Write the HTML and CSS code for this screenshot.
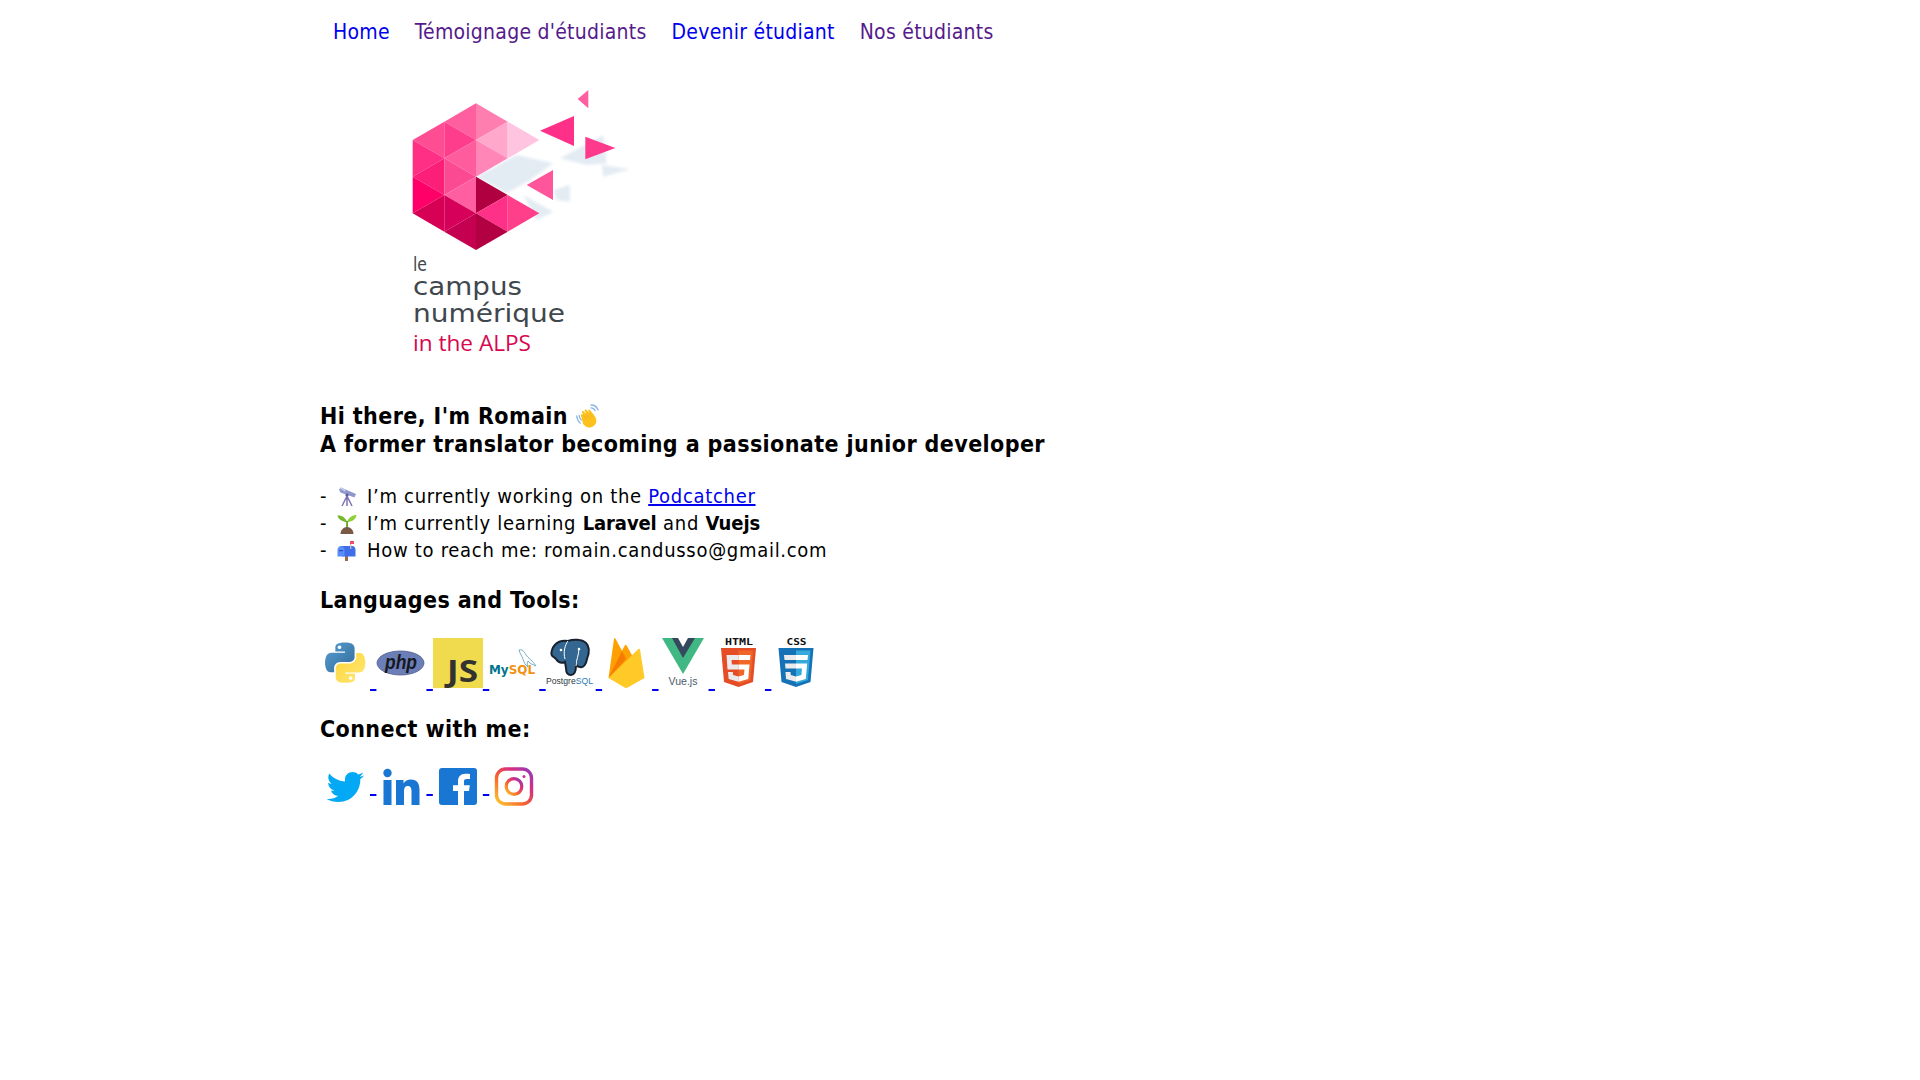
FILE: index.html
```html
<!DOCTYPE html>
<html lang="en">
<head>
    <meta charset="UTF-8">
    <title>Romain Candusso</title>
    <link rel="stylesheet" href="styles.css">
</head>
<body>
    <div class="page">
        <nav class="topnav">
            <a href="#home">Home</a>
            <a class="seen" href="#temoignage">Témoignage d'étudiants</a>
            <a href="#devenir">Devenir étudiant</a>
            <a class="seen" href="#etudiants">Nos étudiants</a>
        </nav>

        <svg class="logo" viewBox="0 0 240 285" width="240" height="285">
            <defs>
                <filter id="soft" x="-30%" y="-30%" width="160%" height="160%"><feGaussianBlur stdDeviation="4.500"></feGaussianBlur></filter>
            </defs>
            <g transform="translate(-10 0) scale(.33333)">
                <g fill="#e3ebf3" filter="url(#soft)">
                    <polygon points="260,290 380,225 490,250 420,300 350,340"></polygon>
                    <polygon points="510,235 640,165 650,250 590,255"></polygon>
                    <polygon points="635,255 720,268 640,290"></polygon>
                    <polygon points="490,330 540,315 540,365 500,360"></polygon>
                    <polygon points="400,345 470,385 490,395 440,420"></polygon>
                </g>
                <polygon fill="#ff4d94" points="68,180 163,125 163,235"></polygon>
                <polygon fill="#ff2f85" points="68,180 163,235 68,290"></polygon>
                <polygon fill="#fb1f78" points="68,290 163,235 163,345"></polygon>
                <polygon fill="#ff0068" points="68,290 163,345 68,400"></polygon>
                <polygon fill="#d60055" points="68,400 163,345 163,455"></polygon>
                <polygon fill="#ff5f9f" points="163,125 258,70 258,180"></polygon>
                <polygon fill="#ff3d8d" points="163,125 258,180 163,235"></polygon>
                <polygon fill="#ff5c9e" points="163,235 258,180 258,290"></polygon>
                <polygon fill="#fb4a92" points="163,235 258,290 163,345"></polygon>
                <polygon fill="#ff5fa0" points="163,345 258,290 258,400"></polygon>
                <polygon fill="#d6005a" points="163,345 258,400 163,455"></polygon>
                <polygon fill="#c60050" points="163,455 258,400 258,510"></polygon>
                <polygon fill="#ff7eb0" points="258,70 353,125 258,180"></polygon>
                <polygon fill="#ffa8cc" points="258,180 353,125 353,235"></polygon>
                <polygon fill="#ff86b7" points="258,180 353,235 258,290"></polygon>
                <polygon fill="#b00040" points="258,290 353,345 258,400"></polygon>
                <polygon fill="#ff3088" points="258,400 353,345 353,455"></polygon>
                <polygon fill="#b30042" points="258,400 353,455 258,510"></polygon>
                <polygon fill="#ffc4e0" points="353,125 448,180 353,235"></polygon>
                <polygon fill="#ff3f8a" points="353,345 448,400 353,455"></polygon>
                <polygon fill="#ff3088" points="450,152 552,108 552,198"></polygon>
                <polygon fill="#ff5fa0" points="595,30 595,85 563,57"></polygon>
                <polygon fill="#ff3a8c" points="586,170 676,204 586,238"></polygon>
                <polygon fill="#ff559a" points="410,315 489,270 489,360"></polygon>
            </g>
            <text class="logo-grey logo-le" x="13" y="191" textLength="14" lengthAdjust="spacingAndGlyphs">le</text>
            <text class="logo-grey" x="13" y="215" textLength="109" lengthAdjust="spacingAndGlyphs">campus</text>
            <text class="logo-grey" x="13" y="242" textLength="152" lengthAdjust="spacingAndGlyphs">numérique</text>
            <text class="logo-pink" x="13" y="271" textLength="118" lengthAdjust="spacingAndGlyphs">in the ALPS</text>
        </svg>

        <h3 class="intro">Hi there, I'm Romain
            <svg class="wave" viewBox="0 0 24 24" width="24" height="24">
                <g fill="none" stroke="#8ab4e8" stroke-width="1.3" stroke-linecap="round">
                    <path d="M.8 12c.2 3 1.500 5.500 3.400 7"></path>
                    <path d="M3.200 11.500c.2 1.800.9 3.300 2 4.500"></path>
                    <path d="M15 1c3 0 6 2.200 7 5"></path>
                    <path d="M15 3.800c1.700.1 3.300 1.200 4 2.800"></path>
                </g>
                <path fill="#fcc21b" d="M5 11.500c-.6-1 .7-2 1.500-1.300l1 1L6 8.500c-.6-1 .8-2 1.600-1.200l3 3.200L8.700 7c-.6-1.100.9-2 1.700-1.200l3.300 3.800-1.400-2.700c-.5-1 1-1.900 1.700-1l4 5.200c2.300 3 2.800 5.700 2 8-1.200 3-4.500 4.900-7.500 4.400-2.700-.4-4.200-2-5.500-3.700z"></path>
                <path fill="none" stroke="#e8a01e" stroke-width=".6" d="M7.500 11.200l3.500 4M10.600 10.500l3.400 4M13.700 9.600l2.600 3.400"></path>
            </svg>
            <br>A former translator becoming a passionate junior developer</h3>

        <p class="about">
            - <svg class="emoji" viewBox="0 0 20 20" width="20" height="20">
                <g fill="none" stroke="#7c74b4" stroke-width="1.5">
                    <path d="M10 9l-5 10M10 9v10M10 9l5 10"></path>
                </g>
                <path fill="#8f97cc" d="M2 2.500l2-2 15 6.500-1.500 3.500-14-5z"></path>
                <path fill="#c5cbe8" d="M3 1.500l1-1 5 2.200-1 2z"></path>
                <circle cx="10" cy="8" r="1.600" fill="#5e5a94"></circle>
            </svg> I’m currently working on the <a href="#podcatcher">Podcatcher</a><br>
            - <svg class="emoji" viewBox="0 0 20 20" width="20" height="20">
                <path fill="#76b82a" d="M10 8C8.500 3.500 4.500 1 .5 1.500 1 5.500 6 8 10 8z"></path>
                <path fill="#8fcf3a" d="M10 8c1.500-4.500 5.500-7 9.500-7-.5 4.500-5 7-9.500 7z"></path>
                <rect x="9.200" y="7" width="1.700" height="7" fill="#5c9a1e"></rect>
                <path fill="#7a5a44" d="M3.500 20c0-4 3-7 6.500-7s6.500 3 6.500 7z"></path>
            </svg> I’m currently learning <b>Laravel</b> and <b>Vuejs</b><br>
            - <svg class="emoji" viewBox="0 0 20 20" width="20" height="20">
                <rect x="8" y="15" width="3" height="5" fill="#9b6a4c"></rect>
                <path fill="#3f6fe8" d="M4 5h11c2.500 0 3.500 2 3.500 4v6.500H5z"></path>
                <path fill="#5b8dfa" d="M4 5c2 0 3.500 1.800 3.500 4v6.500H.5V9C.5 6.800 2 5 4 5z"></path>
                <rect x="13" y="0" width="1.300" height="8" fill="#c9b9c2"></rect>
                <rect x="13" y="0" width="4" height="3" fill="#ee4d63"></rect>
                <rect x="2" y="9" width="4" height="1.200" fill="#2a4fb5"></rect>
            </svg> How to reach me: romain.candusso@gmail.com
        </p>

        <h3 class="section-title">Languages and Tools:</h3>
        <p class="tools">
            <a href="#python"><svg class="tool" viewBox="0 0 50 50" width="50" height="50">
                <defs>
                    <linearGradient id="pyblue" x1="0" y1="0" x2="1" y2="1"><stop offset="0" stop-color="#5a9fd4"></stop><stop offset="1" stop-color="#306998"></stop></linearGradient>
                    <linearGradient id="pyyellow" x1="0" y1="0" x2="1" y2="1"><stop offset="0" stop-color="#ffe873"></stop><stop offset="1" stop-color="#ffd43b"></stop></linearGradient>
                </defs>
                <g transform="translate(5 4.500) scale(.36)">
                    <path fill="url(#pyblue)" d="M54.900 0C50.300 0 46 .4 42.100 1.100 30.800 3.100 28.700 7.300 28.700 15.100V25.200H55.500V28.600H18.600C10.800 28.600 4 33.300 1.900 42.200-.6 52.400-.7 58.800 1.900 69.400 3.800 77.300 8.300 82.900 16.100 82.900H25.300V70.700C25.300 61.900 33 54 42.100 54H68.900C76.300 54 82.200 47.900 82.200 40.400V15.100C82.200 7.800 76.100 2.400 68.900 1.100 64.300.3 59.500 0 54.900 0ZM40.400 8.200C43.200 8.200 45.400 10.500 45.400 13.300 45.400 16.100 43.200 18.400 40.400 18.400 37.600 18.400 35.400 16.100 35.400 13.300 35.400 10.500 37.600 8.200 40.400 8.200Z"></path>
                    <path fill="url(#pyyellow)" transform="rotate(180 56 56)" d="M54.900 0C50.300 0 46 .4 42.100 1.100 30.800 3.100 28.700 7.300 28.700 15.100V25.200H55.500V28.600H18.600C10.800 28.600 4 33.300 1.900 42.200-.6 52.400-.7 58.800 1.900 69.400 3.800 77.300 8.300 82.900 16.100 82.900H25.300V70.700C25.300 61.900 33 54 42.100 54H68.900C76.300 54 82.200 47.900 82.200 40.400V15.100C82.200 7.800 76.100 2.400 68.900 1.100 64.300.3 59.500 0 54.900 0ZM40.400 8.200C43.200 8.200 45.400 10.500 45.400 13.300 45.400 16.100 43.200 18.400 40.400 18.400 37.600 18.400 35.400 16.100 35.400 13.300 35.400 10.500 37.600 8.200 40.400 8.200Z"></path>
                </g>
            </svg> </a>
            <a href="#php"><svg class="tool" viewBox="0 0 50 50" width="50" height="50">
                <ellipse cx="24.500" cy="25" rx="23.500" ry="12" fill="#6c7eb7" stroke="#4c5a8c" stroke-width=".8"></ellipse>
                <text class="php-text" x="25" y="30.500" text-anchor="middle" textLength="32" lengthAdjust="spacingAndGlyphs">php</text>
            </svg> </a>
            <a href="#js"><svg class="tool" viewBox="0 0 50 50" width="50" height="50">
                <rect width="50" height="50" fill="#f0db4f"></rect>
                <text class="js-text" x="14" y="44" textLength="31" lengthAdjust="spacingAndGlyphs">JS</text>
            </svg> </a>
            <a href="#mysql"><svg class="tool" viewBox="0 0 50 50" width="50" height="50">
                <text class="mysql-text" x="0" y="36" textLength="46" lengthAdjust="spacingAndGlyphs"><tspan fill="#00758f">My</tspan><tspan fill="#f29111">SQL</tspan></text>
                <path fill="none" stroke="#5a9bb0" stroke-width=".8" d="M30 12c3-1 5 1 7 5 2 3 7 6 10 11-4-2-6-2-8-5-1 2-1 4 0 6-3-2-4-5-5-8-1-3-3-5-4-9z"></path>
            </svg> </a>
            <a href="#postgres"><svg class="tool" viewBox="0 0 50 50" width="50" height="50">
                <path fill="#336791" stroke="#17222e" stroke-width="2" d="M6 12C9 3 17 2 22 3c5-2 14-2 18 2 4 4 3 11 1 16-1 5-3 9-7 8-2 0-3-1-4-2 0 4-1 10-5 10-4 0-5-3-5-7l-1-6c-4 2-7 0-9-3-3-3-6-3-4-9z"></path>
                <path fill="none" stroke="#fff" stroke-width="1" d="M22 3c-3 4-5 11-3 18M30 28c0-6 3-11 3-18"></path>
                <circle cx="15" cy="12" r="1.300" fill="#fff"></circle>
                <circle cx="33" cy="11" r="1.300" fill="#fff"></circle>
                <text class="pg-text" x="0" y="46" textLength="47" lengthAdjust="spacingAndGlyphs"><tspan fill="#2f3a44">Postgre</tspan><tspan fill="#2d7ab5">SQL</tspan></text>
            </svg> </a>
            <a href="#firebase"><svg class="tool" viewBox="0 0 50 50" width="50" height="50">
                <path fill="#ffa000" d="M6.500 40L12 1c.2-.8 1.100-.9 1.500-.2l6.500 12 3-5.500c.4-.7 1.100-.7 1.500 0L42.500 40z"></path>
                <path fill="#f57c00" d="M6.500 40L20 13l4 8z"></path>
                <path fill="#ffca28" d="M42.500 40L38 11.500c-.2-.9-1-1-1.600-.5L6.500 40l16 9.500c1 .6 2.200.6 3.200 0z"></path>
            </svg> </a>
            <a href="#vue"><svg class="tool" viewBox="0 0 50 50" width="50" height="50">
                <polygon fill="#41b883" points="3,0 15,0 24,16 33,0 45,0 24,36"></polygon>
                <polygon fill="#35495e" points="13,0 19,0 24,9 29,0 36,0 24,20"></polygon>
                <text class="vue-text" x="24" y="47" text-anchor="middle">Vue.js</text>
            </svg> </a>
            <a href="#html"><svg class="tool" viewBox="0 0 50 50" width="50" height="50">
                <text class="badge-text" x="10" y="7" textLength="28" lengthAdjust="spacingAndGlyphs">HTML</text>
                <polygon fill="#e44d26" points="6,10 41,10 38,44 23.500,49 9,44"></polygon>
                <polygon fill="#f16529" points="23.500,12.500 38,12.500 35.500,42 23.500,46"></polygon>
                <path fill="#ebebeb" d="M11.500 17h12v5h-7l.4 4.500h6.600v5h-11zM13 34h4.800l.3 3 5.400 1.500v5.200L13.700 41z"></path>
                <path fill="#fff" d="M35.500 17h-12v5h11.500zM34.500 26.500h-11v5h6l-.6 5.500-5.400 1.500v5.200l9.800-2.700z"></path>
            </svg> </a>
            <a href="#css"><svg class="tool" viewBox="0 0 50 50" width="50" height="50">
                <g transform="translate(1.500 0)">
                    <text class="badge-text" x="14" y="7" textLength="20" lengthAdjust="spacingAndGlyphs">CSS</text>
                    <polygon fill="#1572b6" points="6,10 41,10 38,44 23.500,49 9,44"></polygon>
                    <polygon fill="#33a9dc" points="23.500,12.500 38,12.500 35.500,42 23.500,46"></polygon>
                    <path fill="#ebebeb" d="M11.500 17h12v5H12zM12.500 25.500h11v5H13zM13 34h5l.3 3 5.200 1.500v5.200l-10-2.700z"></path>
                    <path fill="#fff" d="M35.500 17h-12v5H35zM34.700 25.500H23.500v5h6l-.6 6.500-5.400 1.500v5.200l9.800-2.700z"></path>
                </g>
            </svg> </a>
        </p>

        <h3 class="section-title connect">Connect with me:</h3>
        <p class="social">
            <a href="#twitter"><svg class="net" viewBox="0 0 50 40" width="50" height="40">
                <path fill="#03a9f4" d="M44 8.500c-1.400.7-2.800 1-4.400 1.200 1.600-1 2.800-2.400 3.400-4.200-1.500.9-3.100 1.500-4.900 1.900C36.700 5.800 34.700 5 32.600 5c-4.300 0-7.700 3.400-7.700 7.700 0 .6.100 1.200.2 1.700-6.400-.3-12-3.400-15.800-8-.7 1.100-1 2.500-1 3.900 0 2.600 1.400 5 3.400 6.400-1.300 0-2.500-.4-3.500-1v.1c0 3.700 2.700 6.900 6.200 7.600-.7.200-1.300.3-2 .3-.5 0-1 0-1.500-.2 1 3 3.800 5.300 7.200 5.300-2.600 2.100-6 3.300-9.600 3.300-.6 0-1.200 0-1.900-.1C10 33.800 14 35 18.400 35c14.200 0 21.900-11.700 21.900-21.900v-1c1.500-1 2.700-2.300 3.700-3.600z"></path>
            </svg> </a>
            <a href="#linkedin"><svg class="net" viewBox="0 0 50 40" width="50" height="40">
                <circle cx="11.500" cy="6" r="4.200" fill="#1976d2"></circle>
                <rect x="7.500" y="13" width="8" height="25" fill="#1976d2"></rect>
                <path fill="#1976d2" d="M20 13h7.500v3.500c1.500-2.500 4-4 7.500-4 6 0 8.500 4 8.500 10.500V38h-8V24c0-3-1-5-3.800-5s-3.700 2-3.700 5v14h-8z"></path>
            </svg> </a>
            <a href="#facebook"><svg class="net" viewBox="0 0 50 40" width="50" height="40">
                <rect x="6" y="1" width="38" height="37" rx="3" fill="#1976d2"></rect>
                <path fill="#fff" d="M31 38V24h5l.8-5.800H31v-3.500c0-1.700.5-2.700 2.800-2.700H37V7c-.6 0-2.400-.2-4.500-.2-4.500 0-7.500 2.700-7.500 7.600v3.800h-5V24h5v14z"></path>
            </svg> </a>
            <a href="#instagram"><svg class="net" viewBox="0 0 50 40" width="50" height="40">
                <defs>
                    <linearGradient id="insta" x1="0" y1="1" x2="1" y2="0"><stop offset="0" stop-color="#fdc92f"></stop><stop offset=".4" stop-color="#f8622e"></stop><stop offset=".7" stop-color="#d82d7e"></stop><stop offset="1" stop-color="#8e3dc0"></stop></linearGradient>
                </defs>
                <rect x="7.500" y="2" width="35" height="35" rx="9" fill="none" stroke="url(#insta)" stroke-width="3.400"></rect>
                <circle cx="25" cy="19.500" r="7.800" fill="none" stroke="url(#insta)" stroke-width="3.200"></circle>
                <circle cx="35" cy="9.500" r="1.500" fill="#c1358d"></circle>
            </svg> </a>
        </p>
    </div>
</body>
</html>
```

FILE: styles.css
```css
body {
    margin: 0;
    font-family: "DejaVu Sans Condensed", "DejaVu Sans", sans-serif;
    font-stretch: condensed;
    font-size: 20px;
    letter-spacing: 0.7px;
    color: #000;
    background: #fff;
}
a {
    color: #0000ee;
}
b {
    letter-spacing: -0.1px;
}
.page {
    width: 1280px;
    margin: 0 auto;
}
.topnav {
    display: flex;
    gap: 25px;
    padding: 21px 13px 37px;
    font-size: 21px;
    line-height: 22px;
    letter-spacing: 0.25px;
}
.topnav a {
    text-decoration: none;
}
.topnav a.seen {
    color: #551a8b;
}
.logo {
    display: block;
    margin-left: 80px;
}
.logo-grey {
    fill: #40474d;
    font-family: "DejaVu Sans", sans-serif;
    font-stretch: normal;
    font-size: 25px;
    font-weight: 400;
    letter-spacing: 0;
}
.logo-le {
    font-size: 20px;
}
.logo-pink {
    fill: #d8074f;
    font-family: "Open Sans", sans-serif;
    font-stretch: normal;
    font-size: 21px;
    letter-spacing: 0;
}
h3 {
    font-size: 23px;
    line-height: 28px;
    letter-spacing: 0.4px;
    margin: 0;
}
.intro {
    margin-top: 37px;
}
.wave {
    vertical-align: -4px;
    margin-left: 1px;
}
.about {
    margin: 25px 0 0;
    line-height: 27px;
}
.emoji {
    vertical-align: -4px;
    margin: 0 4px 0 3px;
}
.section-title {
    margin-top: 22px;
}
.connect {
    margin-top: 20px;
}
.tools {
    margin: 24px 0 0;
    line-height: 27px;
}
.social {
    margin: 24px 0 0;
    line-height: 27px;
}
.net {
    vertical-align: middle;
}
.php-text {
    font: italic bold 20px "Liberation Sans", sans-serif;
    fill: #16181f;
    letter-spacing: 0;
}
.js-text {
    font: bold 30px "Open Sans", sans-serif;
    fill: #323330;
    letter-spacing: 0;
}
.mysql-text {
    font: bold 12px "DejaVu Sans", sans-serif;
    letter-spacing: 0;
}
.pg-text {
    font: 9px "Liberation Sans", sans-serif;
    letter-spacing: 0;
}
.vue-text {
    font: 10.500px "Liberation Sans", sans-serif;
    fill: #4a5a6a;
    letter-spacing: 0;
}
.badge-text {
    font: bold 8px "DejaVu Sans Mono", monospace;
    fill: #111;
    letter-spacing: 0;
}
```
